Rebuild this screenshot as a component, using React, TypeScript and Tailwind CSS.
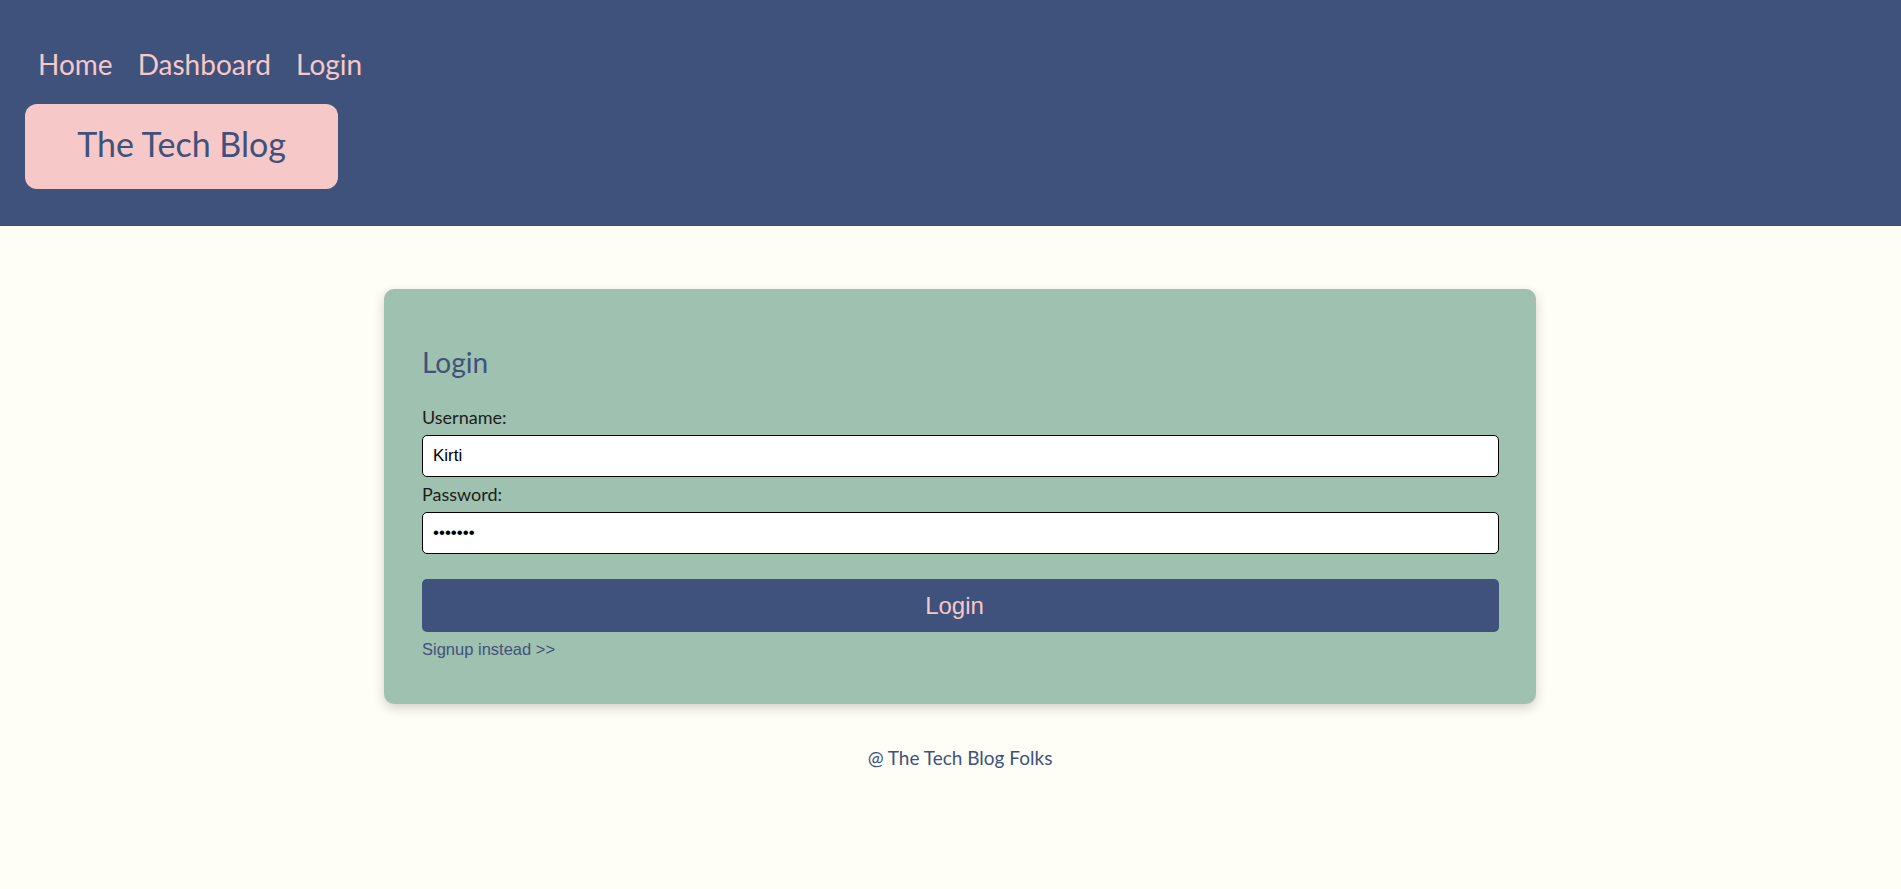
const App = () => {
  return (
    <div className="min-h-[889px] bg-[#fefef6] font-['Lato',sans-serif]">
      <header className="h-[226px] bg-[#3f527c] pt-[50px]">
        <nav className="flex gap-[25px] pl-[38px] text-[28px] leading-none text-[#f7c8c8]">
          <a href="#">Home</a>
          <a href="#">Dashboard</a>
          <a href="#">Login</a>
        </nav>
        <div className="ml-[25px] mt-[26px] flex h-[85px] w-[313px] justify-center rounded-[12px] bg-[#f7c8c8] pt-[23px]">
          <h1 className="text-[34px] leading-none text-[#3f527c]">The Tech Blog</h1>
        </div>
      </header>

      <main className="pt-[63px]">
        <div className="ml-[384px] w-[1152px] rounded-[10px] bg-[#9fc1af] pl-[38px] pr-[37px] pt-[59px] pb-[46px] shadow-[0_4px_12px_rgba(0,0,0,0.18)]">
          <h2 className="text-[28px] leading-none text-[#3f527c]">Login</h2>
          <form className="mt-[32px] flex flex-col">
            <label className="text-[18px] leading-none text-[#1c1c1c]">Username:</label>
            <input
              type="text"
              defaultValue="Kirti"
              className="mt-[9px] h-[42px] w-full rounded-[5px] border border-black bg-white px-[10px] font-['Liberation_Sans',Arial,sans-serif] text-[17px] text-black outline-none"
            />
            <label className="mt-[8px] text-[18px] leading-none text-[#1c1c1c]">Password:</label>
            <input
              type="password"
              defaultValue="1234567"
              autoFocus
              className="mt-[9px] h-[42px] w-full rounded-[5px] border border-black bg-white px-[10px] font-['Liberation_Sans',Arial,sans-serif] text-[17px] text-black outline-none"
            />
            <button
              type="button"
              className="mt-[25px] h-[53px] w-full rounded-[5px] bg-[#3f527c] pr-[12px] font-['Liberation_Sans',Arial,sans-serif] text-[24px] text-[#f7c8c8]"
            >
              Login
            </button>
            <a
              href="#"
              className="mt-[9px] font-['Liberation_Sans',Arial,sans-serif] text-[16.5px] leading-none text-[#3f527c]"
            >
              Signup instead &gt;&gt;
            </a>
          </form>
        </div>
      </main>

      <footer className="mt-[44px] ml-[19px] text-center text-[19px] leading-none text-[#3f527c]">
        @ The Tech Blog Folks
      </footer>
    </div>
  );
};

export default App;
